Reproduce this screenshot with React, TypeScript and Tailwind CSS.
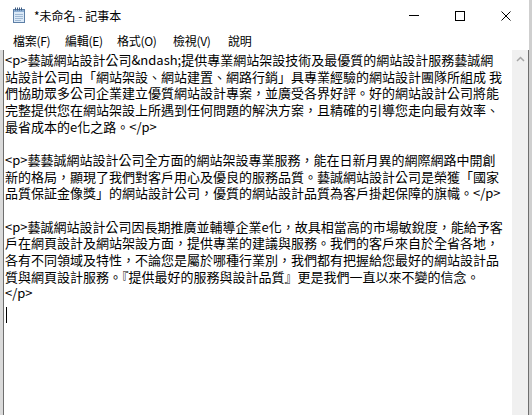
import React from "react";

const lines: string[] = [
  "<p>藝誠網站設計公司&ndash;提供專業網站架設技術及最優質的網站設計服務藝誠網",
  "站設計公司由「網站架設、網站建置、網路行銷」具專業經驗的網站設計團隊所組成 我",
  "們協助眾多公司企業建立優質網站設計專案，並廣受各界好評。好的網站設計公司將能",
  "完整提供您在網站架設上所遇到任何問題的解決方案，且精確的引導您走向最有效率、",
  "最省成本的e化之路。</p>",
  "",
  "<p>藝藝誠網站設計公司全方面的網站架設專業服務，能在日新月異的網際網路中開創",
  "新的格局，顯現了我們對客戶用心及優良的服務品質。藝誠網站設計公司是榮獲「國家",
  "品質保証金像獎」的網站設計公司，優質的網站設計品質為客戶掛起保障的旗幟。</p>",
  "",
  "<p>藝誠網站設計公司因長期推廣並輔導企業e化，故具相當高的市場敏銳度，能給予客",
  "戶在網頁設計及網站架設方面，提供專業的建議與服務。我們的客戶來自於全省各地，",
  "各有不同領域及特性，不論您是屬於哪種行業別，我們都有把握給您最好的網站設計品",
  "質與網頁設計服務。『提供最好的服務與設計品質』更是我們一直以來不變的信念。",
  "</p>",
];

function NotepadIcon() {
  return (
    <svg width="14" height="16" viewBox="0 0 14 16" className="block">
      <rect x="1.5" y="2.5" width="11" height="13" fill="#dbe9f7" stroke="#5d7fa6" />
      <rect x="2" y="3" width="10" height="2" fill="#8fb0d4" />
      <line x1="3" y1="7.5" x2="11" y2="7.5" stroke="#9fb8d3" />
      <line x1="3" y1="9.5" x2="11" y2="9.5" stroke="#9fb8d3" />
      <line x1="3" y1="11.5" x2="11" y2="11.5" stroke="#9fb8d3" />
      <line x1="3" y1="13.5" x2="9" y2="13.5" stroke="#9fb8d3" />
      <rect x="3" y="0.5" width="1" height="3" fill="#3d5a80" />
      <rect x="5" y="0.5" width="1" height="3" fill="#3d5a80" />
      <rect x="7" y="0.5" width="1" height="3" fill="#3d5a80" />
      <rect x="9" y="0.5" width="1" height="3" fill="#3d5a80" />
    </svg>
  );
}

export default function App() {
  const font = "font-['Noto_Sans_CJK_TC','Noto_Sans',sans-serif]";
  return (
    <div
      className={`w-[532px] h-[415px] bg-white overflow-hidden flex flex-col border-r-[3px] border-[#cfcfcf] text-black ${font}`}
    >
      {/* Title bar */}
      <div className="h-[31px] flex items-center shrink-0">
        <div className="ml-[12px] mt-[-1px]">
          <NotepadIcon />
        </div>
        <div className="ml-[8px] text-[12px] leading-none">*未命名 - 記事本</div>
        <div className="ml-auto flex items-center h-full">
          <div className="w-[46px] h-full flex items-center justify-center">
            <div className="w-[10px] h-px bg-black" />
          </div>
          <div className="w-[46px] h-full flex items-center justify-center">
            <div className="w-[10px] h-[10px] border border-black" />
          </div>
          <div className="w-[46px] h-full flex items-center justify-center">
            <svg width="10" height="10" viewBox="0 0 10 10">
              <path d="M0.5 0.5 L9.5 9.5 M9.5 0.5 L0.5 9.5" stroke="#000" strokeWidth="1" />
            </svg>
          </div>
        </div>
      </div>

      {/* Menu bar */}
      <div className="h-[19px] flex items-center text-[12px] leading-none shrink-0 pl-[13px] tracking-[-0.3px]">
        <span className="w-[52px] whitespace-nowrap">檔案(F)</span>
        <span className="w-[52px] whitespace-nowrap">編輯(E)</span>
        <span className="w-[56px] whitespace-nowrap">格式(O)</span>
        <span className="w-[55px] whitespace-nowrap">檢視(V)</span>
        <span className="whitespace-nowrap">說明</span>
      </div>

      {/* Edit area */}
      <div className="flex-1 flex min-h-0">
        <div className="w-[3px] bg-[#dadada] shrink-0" />
        <div className="w-[1px] bg-[#6e6e6e] shrink-0" />
        <div className="flex-1 pt-[2px] pl-[1px] text-[13px] leading-[16.67px] overflow-hidden">
          {lines.map((l, i) => (
            <div key={i} className="h-[16.67px] whitespace-pre">
              {l}
            </div>
          ))}
          <div className="h-[16.67px] flex items-end">
            <div className="w-px h-[16px] bg-black ml-[1px] mb-[-4px]" />
          </div>
        </div>
        <div className="w-[16px] bg-[#f0f0f0] shrink-0 flex flex-col items-center">
          <div className="h-[17px] flex items-center justify-center">
            <svg width="9" height="6" viewBox="0 0 9 6">
              <path d="M1 5 L4.5 1.5 L8 5" stroke="#a6a6a6" strokeWidth="1.5" fill="none" />
            </svg>
          </div>
        </div>
        <div className="w-[1px] bg-[#6e6e6e] shrink-0" />
      </div>
    </div>
  );
}
